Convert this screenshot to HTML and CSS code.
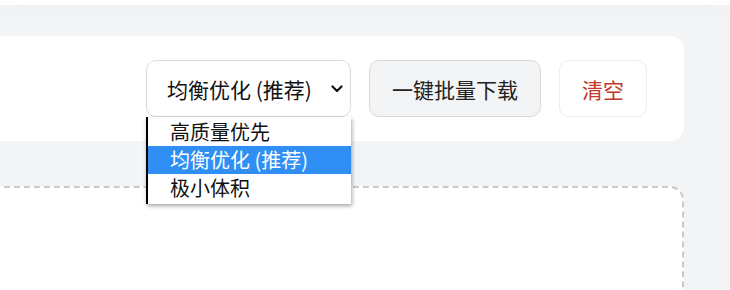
FILE: index.html
```html
<!DOCTYPE html>
<html lang="zh-CN">
<head>
<meta charset="UTF-8">
<meta name="viewport" content="width=device-width, initial-scale=1.0">
<title>图片压缩</title>
<link rel="stylesheet" href="styles.css">
</head>
<body>
<div class="topbar"></div>
<div class="main">
  <div class="toolbar">
    <div class="actions">
      <div class="select-wrap">
        <div class="select">
          <span>均衡优化 (推荐)</span>
          <svg class="chevron" width="12" height="8" viewBox="0 0 12 8"><path d="M1.5 1.5 L6 6 L10.5 1.5" fill="none" stroke="#111" stroke-width="2.2" stroke-linecap="round" stroke-linejoin="round"/></svg>
        </div>
        <ul class="options">
          <li>高质量优先</li>
          <li class="selected">均衡优化 (推荐)</li>
          <li>极小体积</li>
        </ul>
      </div>
      <button class="button">一键批量下载</button>
      <button class="button clear">清空</button>
    </div>
  </div>
  <div class="dropzone"></div>
</div>
</body>
</html>
```

FILE: styles.css
```css
  body {
    margin: 0;
    font-family: "Noto Sans CJK SC", "Liberation Sans", sans-serif;
    background-color: #f3f4f6;
    overflow: hidden;
  }
  .topbar {
    height: 5px;
    background-color: #fff;
    box-shadow: 0 2px 24px rgba(0,0,0,0.05);
  }
  .main {
    margin-left: -30px;
    padding: 31px 46px 0 0;
  }
  .toolbar {
    background-color: #fff;
    border-radius: 14px;
    padding: 24px 37px 24px 24px;
    display: flex;
    justify-content: flex-end;
  }
  .actions {
    display: flex;
    gap: 18px;
  }
  .select-wrap {
    position: relative;
  }
  .select {
    box-sizing: border-box;
    width: 205px;
    height: 57px;
    padding: 0 7px 0 20px;
    border: 1px solid #dcdcdc;
    border-radius: 10px;
    background: #fff;
    display: flex;
    align-items: center;
    justify-content: space-between;
    font-size: 21px;
    color: #111;
  }
  .button {
    box-sizing: border-box;
    height: 57px;
    padding: 0 22px;
    font-family: inherit;
    font-size: 21px;
    color: #222;
    background-color: #f3f4f6;
    border: 1px solid #d9d9d9;
    border-radius: 10px;
  }
  .clear {
    background-color: #fff;
    border-color: #ededed;
    color: #c0392b;
  }
  .options {
    position: absolute;
    top: 57px;
    left: 0;
    width: 205px;
    box-sizing: border-box;
    margin: 0;
    padding: 1px 0 2px;
    list-style: none;
    background: #fff;
    border-left: 2px solid #000;
    box-shadow: 1px 2px 4px rgba(0,0,0,0.35);
    font-size: 20px;
    z-index: 10;
  }
  .options li {
    height: 28px;
    line-height: 28px;
    padding-left: 22px;
    color: #111;
  }
  .options .selected {
    background-color: #2f8ff5;
    color: #fff;
  }
  .dropzone {
    margin-top: 45px;
    height: 120px;
    background-color: #fff;
    border: 2px dashed #c9c9c9;
    border-radius: 14px;
  }
```
